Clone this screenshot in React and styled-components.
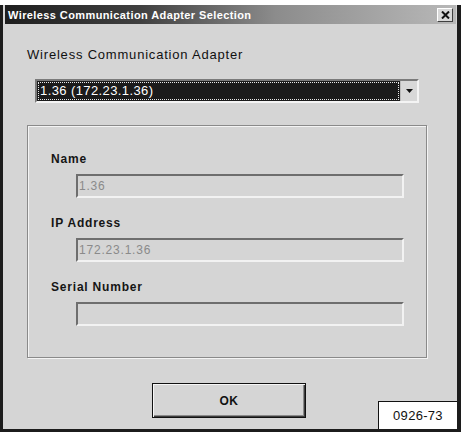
import React from "react";
import styled, { createGlobalStyle } from "styled-components";

const GlobalStyle = createGlobalStyle`
  html, body {
    margin: 0;
    padding: 0;
    background: #ffffff;
  }
  body {
    font-family: "Liberation Sans", Arial, sans-serif;
  }
`;

const Page = styled.div`
  width: 461px;
  height: 432px;
  padding-top: 5px;
  box-sizing: border-box;
`;

const Window = styled.div`
  position: relative;
  height: 427px;
  box-sizing: border-box;
  background: #d5d5d5;
  border-left: 3px solid #1c1c1c;
  border-right: 4px solid #1c1c1c;
  border-bottom: 3px solid #1c1c1c;
  display: flex;
  flex-direction: column;
`;

const TitleBar = styled.div`
  height: 19px;
  margin: 0 1px 0 2px;
  display: flex;
  align-items: center;
  justify-content: space-between;
  padding: 0 3px 0 3px;
  background: linear-gradient(to right, #1e1e1e 0%, #404040 30%, #8c8c8c 60%, #b8b8b8 100%);
`;

const Title = styled.span`
  color: #ffffff;
  font-size: 11px;
  font-weight: bold;
  letter-spacing: 0.4px;
`;

const CloseButton = styled.div`
  width: 16px;
  height: 14px;
  box-sizing: border-box;
  background: #d8d8d8;
  border: 1px solid;
  border-color: #ffffff #404040 #404040 #ffffff;
  display: flex;
  align-items: center;
  justify-content: center;
`;

const Content = styled.div`
  flex: 1;
  display: flex;
  flex-direction: column;
  padding: 0 30px 0 24px;
`;

const Heading = styled.div`
  margin-top: 23px;
  font-size: 13px;
  color: #111;
  line-height: 16px;
  letter-spacing: 0.8px;
`;

const Select = styled.div`
  margin: 16px 8px 0 8px;
  height: 24px;
  box-sizing: border-box;
  border: 2px solid;
  border-color: #7a7a7a #f4f4f4 #f4f4f4 #7a7a7a;
  display: flex;
  background: #1b1b1b;
`;

const SelectValue = styled.div`
  flex: 1;
  margin: 1px;
  border: 1px dotted #e8e8e8;
  color: #ffffff;
  font-size: 13px;
  line-height: 16px;
  padding-left: 1px;
  letter-spacing: 0.4px;
`;

const DropButton = styled.div`
  width: 16px;
  background: #d8d8d8;
  border-left: 1px solid #bbb;
  display: flex;
  align-items: center;
  justify-content: center;
`;

const GroupBox = styled.div`
  margin-top: 22px;
  height: 233px;
  box-sizing: border-box;
  border: 1px solid #8a8a8a;
  box-shadow: inset 1px 1px 0 #f4f4f4, 1px 1px 0 #f4f4f4;
  padding: 26px 22px 0 23px;
  display: flex;
  flex-direction: column;
`;

const FieldLabel = styled.div`
  font-size: 12px;
  font-weight: bold;
  color: #151515;
  line-height: 15px;
  letter-spacing: 0.8px;
  margin-top: ${(p) => (p.first ? "0" : "18px")};
`;

const Field = styled.div`
  margin: 7px 0 0 25px;
  height: 24px;
  box-sizing: border-box;
  border: 2px solid;
  border-color: #6e6e6e #f2f2f2 #f2f2f2 #6e6e6e;
  color: #8a8a8a;
  font-size: 12px;
  line-height: 20px;
  padding-left: 1px;
  letter-spacing: 0.8px;
`;

const Footer = styled.div`
  flex: 1;
  display: flex;
  justify-content: center;
  padding: 25px 0 0 4px;
`;

const OkButton = styled.div`
  width: 154px;
  height: 35px;
  box-sizing: border-box;
  border: 1px solid #111;
  box-shadow: inset 1px 1px 0 #f6f6f6, inset -1px -1px 0 #3c3c3c, inset -2px -2px 0 #8a8a8a;
  display: flex;
  align-items: center;
  justify-content: center;
  font-size: 12px;
  font-weight: bold;
  color: #111;
  letter-spacing: 0.5px;
`;

const Tag = styled.div`
  position: absolute;
  right: 0;
  bottom: 0;
  width: 79px;
  height: 28px;
  box-sizing: border-box;
  background: #ffffff;
  border: 1px solid #111;
  border-right: none;
  border-bottom: none;
  display: flex;
  align-items: center;
  justify-content: center;
  font-size: 13px;
  color: #111;
  letter-spacing: 0.3px;
`;

export default function App() {
  return (
    <>
      <GlobalStyle />
      <Page>
        <Window>
          <TitleBar>
            <Title>Wireless Communication Adapter Selection</Title>
            <CloseButton>
              <svg width="9" height="8" viewBox="0 0 9 8">
                <path d="M1 0.5 L8 7.5 M8 0.5 L1 7.5" stroke="#111" strokeWidth="2" />
              </svg>
            </CloseButton>
          </TitleBar>
          <Content>
            <Heading>Wireless Communication Adapter</Heading>
            <Select>
              <SelectValue>1.36 (172.23.1.36)</SelectValue>
              <DropButton>
                <svg width="7" height="4" viewBox="0 0 7 4">
                  <path d="M0 0 H7 L3.5 4 Z" fill="#111" />
                </svg>
              </DropButton>
            </Select>
            <GroupBox>
              <FieldLabel first>Name</FieldLabel>
              <Field>1.36</Field>
              <FieldLabel>IP Address</FieldLabel>
              <Field>172.23.1.36</Field>
              <FieldLabel>Serial Number</FieldLabel>
              <Field />
            </GroupBox>
            <Footer>
              <OkButton>OK</OkButton>
            </Footer>
          </Content>
          <Tag>0926-73</Tag>
        </Window>
      </Page>
    </>
  );
}
